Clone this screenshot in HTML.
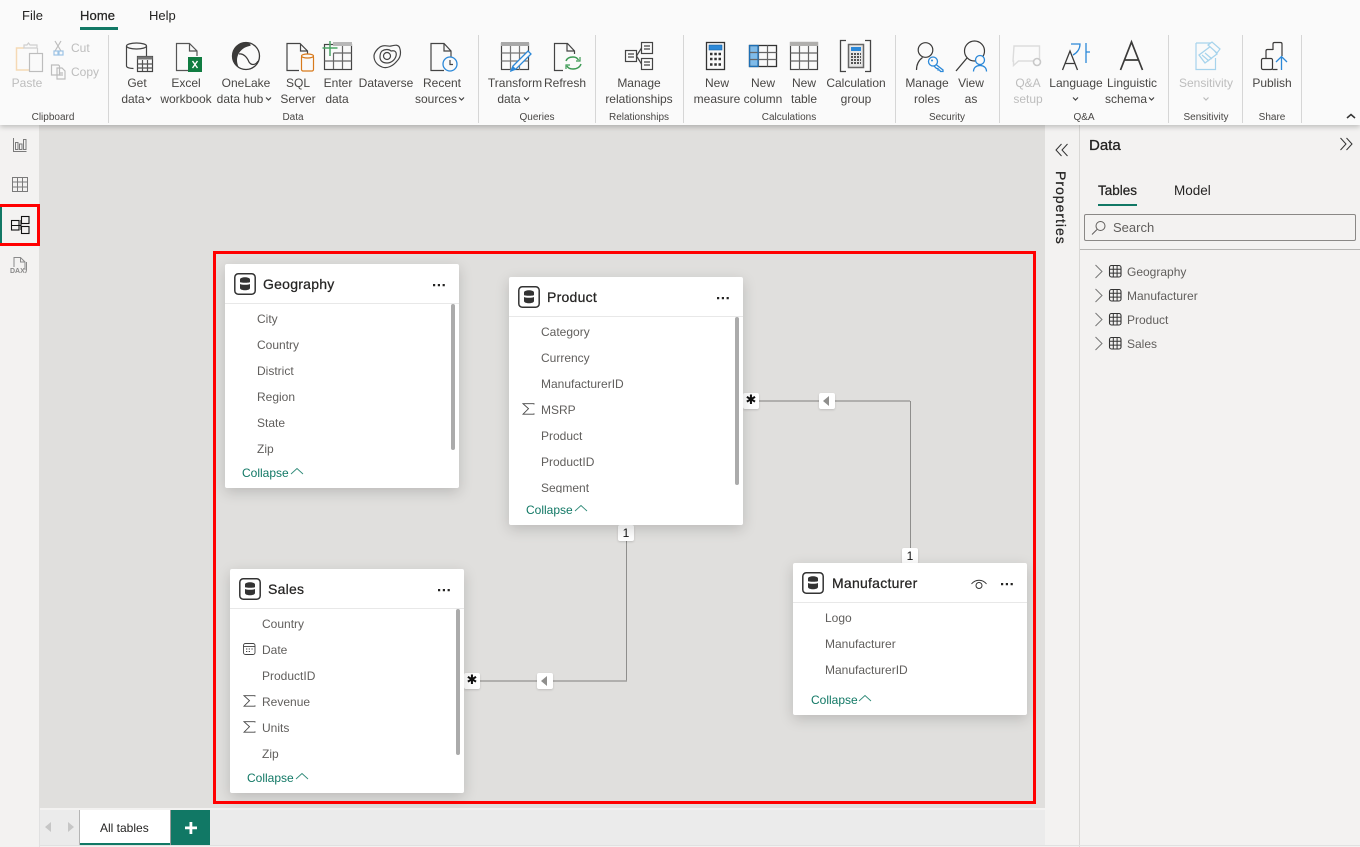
<!DOCTYPE html>
<html><head><meta charset="utf-8"><style>
html,body{margin:0;padding:0;width:1360px;height:847px;overflow:hidden;background:#f3f2f1}
body{position:relative;font-family:"Liberation Sans","DejaVu Sans",sans-serif;font-size:12px;color:#444}
div,span,svg{position:absolute}
.t{white-space:nowrap;line-height:16px}
.c{white-space:nowrap;line-height:16px;transform:translateX(-50%);color:#484644}
.g{white-space:nowrap;line-height:12px;font-size:10px;transform:translateX(-50%);color:#484644;top:112px}
.d{color:#bdbdbd}
.dv{width:1px;top:35px;height:88px;background:#d6d6d6}
.card{background:#fff;width:234px;border-radius:2px;box-shadow:0 4px 14px rgba(0,0,0,.17)}
.hd{left:0;top:39px;width:234px;height:1px;background:#e8e8e8}
.ti{left:38px;top:12px;font-size:14px;line-height:16px;color:#252423;white-space:nowrap;-webkit-text-stroke:.25px #252423;letter-spacing:.25px}
.list{left:0;top:40px;width:234px;overflow:hidden}
.f{left:32px;white-space:nowrap;line-height:16px;color:#605e5c}
.col{left:17px;color:#117865;line-height:16px;white-space:nowrap}
.sb{width:4px;background:#ababab;border-radius:2px;top:40px}
.bd{background:#fff;width:16px;height:16px;border-radius:2px;box-shadow:0 1px 2px rgba(0,0,0,.15);text-align:center;color:#111;line-height:16px}
.st{font-family:"DejaVu Sans",sans-serif;font-size:13px;line-height:16px}
.tr{left:1127px;color:#605e5c;line-height:16px;white-space:nowrap}
</style></head><body>
<!-- canvas -->
<div style="left:39px;top:125px;width:1006px;height:683px;background:#e0dfdd"></div>
<!-- left rail -->
<div style="left:0;top:125px;width:39px;height:722px;background:#f3f2f1"></div>
<div style="left:39px;top:808px;width:1px;height:39px;background:#e1e1e1"></div>
<!-- properties / data panel -->
<div style="left:1045px;top:125px;width:34px;height:722px;background:#f3f2f1"></div>
<div style="left:1079px;top:125px;width:1px;height:722px;background:#d9d8d6"></div>
<div style="left:1080px;top:125px;width:280px;height:722px;background:#f3f2f1"></div>
<!-- ribbon -->
<div style="left:0;top:0;width:1360px;height:125px;background:#fafafa;box-shadow:0 2px 5px rgba(0,0,0,.22)"></div>

<div class="t" style="left:22px;top:8px;font-size:13px;color:#252423">File</div>
<div class="t" style="left:80px;top:8px;font-size:13px;color:#252423;-webkit-text-stroke:.25px #252423;letter-spacing:.1px">Home</div>
<div style="left:80px;top:27px;width:38px;height:3px;background:#117865"></div>
<div class="t" style="left:149px;top:8px;font-size:13px;color:#252423">Help</div>

<div class="dv" style="left:108px"></div><div class="dv" style="left:478px"></div><div class="dv" style="left:595px"></div><div class="dv" style="left:683px"></div><div class="dv" style="left:895px"></div><div class="dv" style="left:999px"></div><div class="dv" style="left:1168px"></div><div class="dv" style="left:1242px"></div><div class="dv" style="left:1301px"></div>

<!-- ribbon labels -->
<div class="c d" style="left:27px;top:75px">Paste</div>
<div class="t d" style="left:71px;top:40px">Cut</div>
<div class="t d" style="left:71px;top:64px">Copy</div>
<div class="c" style="left:137px;top:75px">Get</div><div class="c" style="left:133px;top:91px">data</div>
<div class="c" style="left:186px;top:75px">Excel</div><div class="c" style="left:186px;top:91px">workbook</div>
<div class="c" style="left:246px;top:75px">OneLake</div><div class="c" style="left:240px;top:91px">data hub</div>
<div class="c" style="left:298px;top:75px">SQL</div><div class="c" style="left:298px;top:91px">Server</div>
<div class="c" style="left:338px;top:75px">Enter</div><div class="c" style="left:337px;top:91px">data</div>
<div class="c" style="left:386px;top:75px">Dataverse</div>
<div class="c" style="left:442px;top:75px">Recent</div><div class="c" style="left:436px;top:91px">sources</div>
<div class="c" style="left:515px;top:75px">Transform</div><div class="c" style="left:509px;top:91px">data</div>
<div class="c" style="left:565px;top:75px">Refresh</div>
<div class="c" style="left:639px;top:75px">Manage</div><div class="c" style="left:639px;top:91px">relationships</div>
<div class="c" style="left:717px;top:75px">New</div><div class="c" style="left:717px;top:91px">measure</div>
<div class="c" style="left:763px;top:75px">New</div><div class="c" style="left:763px;top:91px">column</div>
<div class="c" style="left:804px;top:75px">New</div><div class="c" style="left:804px;top:91px">table</div>
<div class="c" style="left:856px;top:75px">Calculation</div><div class="c" style="left:856px;top:91px">group</div>
<div class="c" style="left:927px;top:75px">Manage</div><div class="c" style="left:927px;top:91px">roles</div>
<div class="c" style="left:971px;top:75px">View</div><div class="c" style="left:971px;top:91px">as</div>
<div class="c d" style="left:1028px;top:75px">Q&amp;A</div><div class="c d" style="left:1028px;top:91px">setup</div>
<div class="c" style="left:1076px;top:75px">Language</div>
<div class="c" style="left:1132px;top:75px">Linguistic</div><div class="c" style="left:1126px;top:91px">schema</div>
<div class="c d" style="left:1206px;top:75px">Sensitivity</div>
<div class="c" style="left:1272px;top:75px">Publish</div>

<div class="g" style="left:53px">Clipboard</div>
<div class="g" style="left:293px">Data</div>
<div class="g" style="left:537px">Queries</div>
<div class="g" style="left:639px">Relationships</div>
<div class="g" style="left:789px">Calculations</div>
<div class="g" style="left:947px">Security</div>
<div class="g" style="left:1084px">Q&amp;A</div>
<div class="g" style="left:1206px">Sensitivity</div>
<div class="g" style="left:1272px">Share</div>

<!-- ribbon icons -->
<svg style="left:0;top:0" width="1360" height="125" fill="none" stroke-width="1.2">
<!-- chevrons -->
<g stroke="#444"><path d="M146 97.500l2.500 2.500 2.500-2.500M266 97.500l2.500 2.500 2.500-2.500M459 97.500l2.500 2.500 2.500-2.500M524 97.500l2.500 2.500 2.500-2.500M1073 97.500l2.500 2.500 2.500-2.500M1149 97.500l2.500 2.500 2.500-2.500"/></g>
<path d="M1203.500 97.500l2.500 2.500 2.500-2.500" stroke="#bbb"/>
<path d="M1347 118l4-3.500 4 3.500" stroke="#333" stroke-width="1.500"/>
<!-- paste -->
<path d="M24 48h-7.500v22h16" stroke="#f5d9b5" stroke-width="1.500"/><path d="M24 47v-2h3l1.500-2 1.500 2h7v3H24zM37.500 48v5" stroke="#cfcfcf"/><rect x="29.500" y="53.500" width="13" height="18" fill="#fafafa" stroke="#bdbdbd"/>
<!-- cut -->
<path d="M55 41l6 10M61 41l-6 10" stroke="#bdbdbd"/><rect x="54" y="51" width="4" height="4" stroke="#9cc3e5"/><rect x="59" y="51" width="4" height="4" stroke="#9cc3e5"/>
<!-- copy -->
<path d="M51.500 65h7l1 1v9h-8zM57 68h5l3 3v8h-8z" stroke="#bdbdbd"/><path d="M59 73h4M59 75h4" stroke="#bdbdbd"/>
<!-- get data -->
<g stroke="#444"><ellipse cx="136.500" cy="46" rx="10" ry="3"/><path d="M126.500 46v20c0 1.500 3 2.500 7 2.500M146.500 46v10"/></g>
<rect x="137.500" y="56.500" width="15" height="15" fill="#fafafa" stroke="#444"/><rect x="137.500" y="56.500" width="15" height="3" fill="#777"/><path d="M137.500 64h15M137.500 68h15M142.500 60v11M147.500 60v11" stroke="#555"/>
<!-- excel -->
<path d="M188.500 70.500h-12v-27h13l7.500 7.500v5M189.500 43.500v7.500h7.500" stroke="#555"/><rect x="188" y="57" width="14" height="15" fill="#107c41"/><path d="M192.500 61l5 7M197.500 61l-5 7" stroke="#fff" stroke-width="1.400"/>
<!-- onelake -->
<circle cx="246" cy="56" r="13.500" stroke="#3b3a39" stroke-width="1.300"/><path d="M246 42.500c-7 0-13.500 6-13.500 13.500 0 5 3 9 6 11-2-5-2-9 0-13 2-4 6-7 11-8 3-.5 0-3.500-3.500-3.500z" fill="#3b3a39"/><path d="M239 54c4-1 8 3 10 8 2 3 6 4 9-1" stroke="#3b3a39"/>
<!-- sql -->
<path d="M299 70.500h-12v-27h13l7.500 7.500v3M300.500 43.500v7.500h7" stroke="#444"/><rect x="301.500" y="56" width="12" height="15" rx="1.500" fill="#fafafa" stroke="#d87a1c"/><ellipse cx="307.500" cy="56" rx="6" ry="2" fill="#fafafa" stroke="#d87a1c"/>
<!-- enter data -->
<rect x="324.500" y="44.500" width="27" height="25" stroke="#444"/><rect x="333" y="42" width="19" height="4" fill="#b8b8b8"/><path d="M333.500 53h18M324.500 61h27M333.500 53v16M342.500 46v23" stroke="#666"/><path d="M322.500 48h15M330 41v15" stroke="#4aa564" stroke-width="1.500"/>
<!-- dataverse -->
<g stroke="#444"><path d="M380 47c5-3 8 0 11-1 4-1 8-2 9 3 1 4 1 8-3 12-4 5-10 8-15 6-5-2-8-6-8-11 0-3 3-7 6-9z"/><path d="M382 51c3-2 7-2 9 0 4-1 6 1 5 5-1 4-5 7-9 7-4 0-7-2-7-6 0-3 1-5 2-6z"/><circle cx="387" cy="56" r="3.500"/></g>
<!-- recent -->
<path d="M444 70.500h-13v-27h13l7 7.500v6M444 43.500v7.500h7" stroke="#444"/><circle cx="450" cy="64" r="7" fill="#fafafa" stroke="#2b88d8" stroke-width="1.300"/><path d="M450 60v4.500h3" stroke="#444"/>
<!-- transform -->
<rect x="501.500" y="43.500" width="27" height="26" stroke="#444"/><rect x="501" y="42" width="28" height="4" fill="#a8a8a8"/><path d="M501.500 53h27M501.500 61h27M510.500 46v24M519.500 46v24" stroke="#777"/>
<path d="M513 66l15-15 3 3-15 15-5 2z" fill="#fafafa" stroke="#2b88d8" stroke-width="1.300"/><path d="M510 71l3-5 3 3z" fill="#2b88d8"/>
<!-- refresh -->
<path d="M563 70.500h-8.500v-27h13l7 7.500v3M567 43.500v7.500h7.500" stroke="#444"/><path d="M566 61c1-3 4-4 7-4s4 1 5.500 3M581 64c-1 3-4 5-8 5-3 0-5-1-6-3" stroke="#3c9a54" stroke-width="1.400"/><path d="M580 57v4h-4M566 69v-4h4" stroke="#3c9a54"/>
<!-- manage relationships -->
<g stroke="#444"><rect x="625.500" y="50.500" width="11" height="11"/><rect x="641.500" y="42.500" width="11" height="11"/><rect x="641.500" y="58.500" width="11" height="11"/><path d="M636.500 56l5-8M636.500 56l5 8M628 54h6M628 57h6M644 46h6M644 49h6M644 62h6M644 65h6"/></g>
<!-- new measure -->
<rect x="706.500" y="42.500" width="18" height="27" stroke="#333" stroke-width="1.300"/><rect x="709" y="45" width="13" height="5" fill="#2b88d8" stroke="#1a5f9c" stroke-width=".6"/>
<path d="M710 54h2.500M714.300 54h2.500M718.500 54h2.500M710 59h2.500M714.300 59h2.500M718.500 59h2.500M710 64.500h2.500M714.300 64.500h2.500M718.500 64.500h2.500" stroke="#333" stroke-width="2.600"/>
<!-- new column -->
<rect x="749.500" y="45.500" width="8" height="21" fill="#7fbbe9"/><rect x="749.500" y="45.500" width="27" height="21" stroke="#333" stroke-width="1.300"/><path d="M749.500 52.500h27M749.500 59.500h27M758.500 45.500v21M767.500 45.500v21" stroke="#666"/><path d="M749.500 45.500v21h8.500v-21z" stroke="#1d6fb5"/>
<!-- new table -->
<rect x="790.500" y="42.500" width="27" height="27" stroke="#444" stroke-width="1.200"/><rect x="790" y="42" width="28" height="4" fill="#b0afad"/><path d="M790.500 53h27M790.500 61h27M799.500 46v24M808.500 46v24" stroke="#666"/>
<!-- calc group -->
<path d="M846 40.500h-5.500v31h5.500M865 40.500h5.500v31H865" stroke="#444" stroke-width="1.300"/><rect x="848.500" y="44.500" width="15" height="23" fill="#e6e6e6" stroke="#666" stroke-width="1.500"/><rect x="851" y="47" width="10" height="4" fill="#2b88d8"/>
<path d="M851 54h10M851 57h10M851 60h10M851 63h10" stroke="#555" stroke-width="2" stroke-dasharray="2 1"/>
<!-- manage roles -->
<g stroke="#3b3a39"><circle cx="925.500" cy="50" r="7.300"/><path d="M916.500 70c0-6 2-9.500 6-12.500"/></g>
<g stroke="#2b88d8" stroke-width="1.300"><circle cx="933" cy="61.500" r="4.500" fill="#fafafa"/><path d="M936 64.500l7 5.500v1.500h-2.500l-1-1.500h-1.500v-1.500h-1.500l-2.500-2.500"/></g><circle cx="932" cy="60.500" r="1" fill="#2b88d8"/>
<!-- view as -->
<g stroke="#3b3a39"><circle cx="974.500" cy="51" r="10"/><path d="M967 58l-11 13" stroke-width="1.300"/></g>
<g stroke="#2b88d8" stroke-width="1.300"><circle cx="980" cy="60" r="4.500" fill="#fafafa"/><path d="M973.500 71.500c0-4 3-6 6.500-6s6.500 2 6.500 6"/></g>
<!-- q&a -->
<path d="M1014 46h25.500v15h-21l-5 4.500v-4.500h-.5z" stroke="#dcdcdc" stroke-width="1.400"/><circle cx="1037" cy="62" r="3.500" fill="#fafafa" stroke="#c8c8c8" stroke-width="1.600"/>
<!-- language -->
<path d="M1062.500 70l7.500-19 7.500 19M1065 63.500h10" stroke="#3b3a39" stroke-width="1.300"/><path d="M1071 44h9c0 5-3 9-7 11M1086 43v20M1086 52h4" stroke="#2b88d8" stroke-width="1.300"/>
<!-- linguistic -->
<path d="M1120.500 70l11-28 11 28M1124.500 60h14" stroke="#3b3a39" stroke-width="1.700"/>
<!-- sensitivity -->
<path d="M1196 43h16v5M1215.500 58v11.500H1196V43" stroke="#a6d3ec"/><path d="M1199 55l12-9 6 8-12 9z" fill="#fafafa" stroke="#a6d3ec" stroke-width="1.300"/><path d="M1208 45l4-3 8 7-3 4z" fill="#fafafa" stroke="#a6d3ec"/><path d="M1202 55l7 6M1205 53l7 6" stroke="#a6d3ec"/>
<!-- publish -->
<g stroke="#3b3a39"><rect x="1261.500" y="58.500" width="11" height="11" rx="1.500"/><path d="M1266 58v-7c0-1 .5-1.500 1.500-1.500h5.500M1273 50v-6c0-1 .5-1.500 1.500-1.500h6c1 0 1.500.5 1.500 1.500v12M1272.500 69.500h5"/></g><path d="M1281.500 70V57M1276 62l5.500-5.500 5.500 5.500" stroke="#2b88d8" stroke-width="1.300"/>
</svg>

<!-- rail icons -->
<svg style="left:0;top:125px" width="40" height="160" fill="none">
<g stroke="#7a7a7a"><path d="M13.500 13v13.500h13"/><rect x="15.500" y="17.500" width="2.500" height="7"/><rect x="19.500" y="19" width="2.500" height="5.500"/><rect x="23.500" y="14.500" width="2.500" height="10"/></g>
<g stroke="#7a7a7a"><rect x="12.500" y="52.500" width="15" height="14"/><path d="M12.500 57h15M12.500 62h15M17.500 52.500v14M22.500 52.500v14"/></g>
<g stroke="#111" stroke-width="1.100"><rect x="11.500" y="95.500" width="7.500" height="9.500"/><rect x="21.500" y="91.500" width="7.500" height="7"/><rect x="21.500" y="101.500" width="7.500" height="7"/><path d="M11.500 100.500h7.500M19 100.500h2M21 95v10"/></g>
<g stroke="#8a8a8a"><path d="M14 142v-9.500h6.500l4.500 4.500v8M20.500 132.500v4.500h4.500M26.500 137v8c0 1-.5 2-1 3"/></g>
<text x="10" y="148" font-family="Liberation Sans" font-size="7" fill="#8a8a8a" font-weight="bold">DAX</text>
</svg>

<!-- connectors -->
<svg style="left:0;top:0" width="1360" height="847" fill="none">
<path d="M758 401H910" stroke="#a09f9d" stroke-width="1.600"/><path d="M910.500 401V550" stroke="#8f8e8c"/>
<path d="M626.500 540V681" stroke="#8f8e8c"/><path d="M627 681H478" stroke="#a09f9d" stroke-width="1.600"/>
</svg>
<div class="bd st" style="left:743px;top:393px">✱</div>
<div class="bd" style="left:819px;top:393px"></div>
<svg style="left:822px;top:396px" width="10" height="10"><path d="M7 0v10L1 5z" fill="#8f8e8c"/></svg>
<div class="bd" style="left:902px;top:548px">1</div>
<div class="bd" style="left:618px;top:525px;">1</div>
<div class="bd st" style="left:464px;top:673px">✱</div>
<div class="bd" style="left:537px;top:673px"></div>
<svg style="left:540px;top:676px" width="10" height="10"><path d="M7 0v10L1 5z" fill="#8f8e8c"/></svg>

<!-- Geography -->
<div class="card" style="left:225px;top:264px;height:224px">
<svg style="left:9px;top:9px" width="22" height="22" fill="none"><rect x=".8" y=".8" width="20.400" height="20.400" rx="3.500" stroke="#333" stroke-width="1.500"/><path d="M6 6.500c0-3 10-3 10 0v2.500c0 1-10 1-10 0zM6 11c2 1 8 1 10 0v4c0 3-10 3-10 0z" fill="#333"/></svg>
<div class="ti">Geography</div>
<svg style="left:208px;top:20px" width="12" height="3"><path d="M0 0h2.200v2.200H0zM4.800 0H7v2.200H4.800zM9.600 0h2.200v2.200H9.600z" fill="#252423"/></svg>
<div class="hd"></div>
<div class="list" style="height:172px">
<div class="f" style="top:7px">City</div><div class="f" style="top:33px">Country</div><div class="f" style="top:59px">District</div><div class="f" style="top:85px">Region</div><div class="f" style="top:111px">State</div><div class="f" style="top:137px">Zip</div>
</div>
<div class="sb" style="left:226px;height:146px"></div>
<div class="col" style="top:201px">Collapse</div>
<svg style="left:65px;top:203px" width="14" height="9" fill="none"><path d="M1 7l6-5.500L13 7" stroke="#2f8a78" stroke-width=".9"/></svg>
</div>

<!-- Product -->
<div class="card" style="left:509px;top:277px;height:248px">
<svg style="left:9px;top:9px" width="22" height="22" fill="none"><rect x=".8" y=".8" width="20.400" height="20.400" rx="3.500" stroke="#333" stroke-width="1.500"/><path d="M6 6.500c0-3 10-3 10 0v2.500c0 1-10 1-10 0zM6 11c2 1 8 1 10 0v4c0 3-10 3-10 0z" fill="#333"/></svg>
<div class="ti">Product</div>
<svg style="left:208px;top:20px" width="12" height="3"><path d="M0 0h2.200v2.200H0zM4.800 0H7v2.200H4.800zM9.600 0h2.200v2.200H9.600z" fill="#252423"/></svg>
<div class="hd"></div>
<div class="list" style="height:176px">
<div class="f" style="top:7px">Category</div><div class="f" style="top:33px">Currency</div><div class="f" style="top:59px">ManufacturerID</div><div class="f" style="top:85px">MSRP</div><div class="f" style="top:111px">Product</div><div class="f" style="top:137px">ProductID</div><div class="f" style="top:163px">Segment</div>
<svg style="left:13px;top:86px" width="13" height="12" fill="none"><path d="M12 1.500V.7H1l5.500 5-5.500 5.500h11v-.8" stroke="#444" stroke-width=".9"/></svg>
</div>
<div class="sb" style="left:226px;height:168px"></div>
<div class="col" style="top:225px">Collapse</div>
<svg style="left:65px;top:227px" width="14" height="9" fill="none"><path d="M1 7l6-5.500L13 7" stroke="#2f8a78" stroke-width=".9"/></svg>
</div>

<!-- Sales -->
<div class="card" style="left:230px;top:569px;height:224px">
<svg style="left:9px;top:9px" width="22" height="22" fill="none"><rect x=".8" y=".8" width="20.400" height="20.400" rx="3.500" stroke="#333" stroke-width="1.500"/><path d="M6 6.500c0-3 10-3 10 0v2.500c0 1-10 1-10 0zM6 11c2 1 8 1 10 0v4c0 3-10 3-10 0z" fill="#333"/></svg>
<div class="ti">Sales</div>
<svg style="left:208px;top:20px" width="12" height="3"><path d="M0 0h2.200v2.200H0zM4.800 0H7v2.200H4.800zM9.600 0h2.200v2.200H9.600z" fill="#252423"/></svg>
<div class="hd"></div>
<div class="list" style="height:172px">
<div class="f" style="top:7px">Country</div><div class="f" style="top:33px">Date</div><div class="f" style="top:59px">ProductID</div><div class="f" style="top:85px">Revenue</div><div class="f" style="top:111px">Units</div><div class="f" style="top:137px">Zip</div>
<svg style="left:13px;top:34px" width="13" height="12" fill="none"><rect x=".5" y=".5" width="11.500" height="11" rx="2" stroke="#444" stroke-width=".9"/><path d="M.5 3.500h11.500" stroke="#444" stroke-width=".9"/><path d="M3 6h1.300M5.700 6H7M8.400 6h1.300M3 8.500h1.300M5.700 8.500H7" stroke="#444"/></svg>
<svg style="left:13px;top:86px" width="13" height="12" fill="none"><path d="M12 1.500V.7H1l5.500 5-5.500 5.500h11v-.8" stroke="#444" stroke-width=".9"/></svg>
<svg style="left:13px;top:112px" width="13" height="12" fill="none"><path d="M12 1.500V.7H1l5.500 5-5.500 5.500h11v-.8" stroke="#444" stroke-width=".9"/></svg>
</div>
<div class="sb" style="left:226px;height:146px"></div>
<div class="col" style="top:201px">Collapse</div>
<svg style="left:65px;top:203px" width="14" height="9" fill="none"><path d="M1 7l6-5.500L13 7" stroke="#2f8a78" stroke-width=".9"/></svg>
</div>

<!-- Manufacturer -->
<div class="card" style="left:793px;top:563px;height:152px">
<svg style="left:9px;top:9px" width="22" height="22" fill="none"><rect x=".8" y=".8" width="20.400" height="20.400" rx="3.500" stroke="#333" stroke-width="1.500"/><path d="M6 6.500c0-3 10-3 10 0v2.500c0 1-10 1-10 0zM6 11c2 1 8 1 10 0v4c0 3-10 3-10 0z" fill="#333"/></svg>
<div class="ti" style="left:39px">Manufacturer</div>
<svg style="left:177px;top:14px" width="18" height="14" fill="none"><path d="M1.500 7c4-5 11-5 15 0" stroke="#333"/><circle cx="9" cy="8.500" r="3" stroke="#333"/></svg>
<svg style="left:208px;top:20px" width="12" height="3"><path d="M0 0h2.200v2.200H0zM4.800 0H7v2.200H4.800zM9.600 0h2.200v2.200H9.600z" fill="#252423"/></svg>
<div class="hd"></div>
<div class="list" style="height:100px">
<div class="f" style="top:7px">Logo</div><div class="f" style="top:33px">Manufacturer</div><div class="f" style="top:59px">ManufacturerID</div>
</div>
<div class="col" style="top:129px;left:18px">Collapse</div>
<svg style="left:65px;top:131px" width="14" height="9" fill="none"><path d="M1 7l6-5.500L13 7" stroke="#2f8a78" stroke-width=".9"/></svg>
</div>

<!-- red highlight -->
<div style="left:213px;top:251px;width:817px;height:547px;border:3px solid #ff0000"></div>
<div style="left:0;top:204px;width:40px;height:42px;box-sizing:border-box;border:3px solid #ff0000;border-left:0"></div>
<div style="left:0;top:207px;width:2px;height:36px;background:#117865"></div>
<div style="left:0;top:204px;width:2px;height:3px;background:#ff0000"></div>

<!-- properties -->
<svg style="left:1055px;top:143px" width="14" height="14" fill="none"><path d="M6.500 1L1 7l5.500 6M12.500 1L7 7l5.500 6" stroke="#333"/></svg>
<div class="t" style="left:1053px;top:171px;writing-mode:vertical-rl;font-size:14px;color:#252423;-webkit-text-stroke:.25px #252423;letter-spacing:1px">Properties</div>

<!-- data pane -->
<div class="t" style="left:1089px;top:136px;font-size:15px;line-height:18px;color:#252423;-webkit-text-stroke:.3px #252423;margin-top:1px">Data</div>
<svg style="left:1339px;top:137px" width="14" height="14" fill="none"><path d="M1.500 1L7 7l-5.500 6M7.500 1L13 7l-5.500 6" stroke="#333"/></svg>
<div class="t" style="left:1098px;top:183px;font-size:13.500px;color:#252423;-webkit-text-stroke:.25px #252423">Tables</div>
<div style="left:1098px;top:204px;width:39px;height:2px;background:#117865"></div>
<div class="t" style="left:1174px;top:183px;font-size:13.500px;color:#252423">Model</div>
<div style="left:1084px;top:214px;width:270px;height:25px;border:1px solid #8a8886;border-radius:2px"></div>
<svg style="left:1091px;top:220px" width="16" height="16" fill="none"><circle cx="9.500" cy="6" r="4.500" stroke="#605e5c"/><path d="M6 9.500L1 14.500" stroke="#605e5c"/></svg>
<div class="t" style="left:1113px;top:220px;font-size:13px;color:#605e5c">Search</div>
<div style="left:1080px;top:249px;width:280px;height:1px;background:#b5b4b2"></div>
<svg style="left:1094px;top:263px" width="30" height="90" fill="none">
<defs><g id="tb"><path d="M1.500 2l6.500 6.500-6.500 6.500" stroke="#777"/><rect x="15.500" y="2.500" width="11.500" height="11.500" rx="2" stroke="#333" stroke-width="1.100"/><path d="M15.500 6.300h11.500M15.500 10.100h11.500M19.300 2.500v11.500M23.100 2.500v11.500" stroke="#333"/></g></defs>
<use href="#tb" y="0"/><use href="#tb" y="24"/><use href="#tb" y="48"/><use href="#tb" y="72"/></svg>
<div class="tr" style="top:264px">Geography</div><div class="tr" style="top:288px">Manufacturer</div><div class="tr" style="top:312px">Product</div><div class="tr" style="top:336px">Sales</div>

<!-- bottom tabs -->
<div style="left:40px;top:810px;width:1005px;height:35px;background:#ebebeb"></div>
<div style="left:40px;top:845px;width:1320px;height:1px;background:#e1e1e1"></div>
<svg style="left:44px;top:821px" width="32" height="14"><path d="M7 1v10L1 6zM24 1v10l6-5z" fill="#c6c6c6"/></svg>
<div style="left:79px;top:810px;width:1px;height:35px;background:#b5b5b5"></div>
<div style="left:80px;top:810px;width:90px;height:33px;background:#fff;border-bottom:2px solid #117865"></div>
<div class="t" style="left:100px;top:820px;color:#252423">All tables</div>
<div style="left:170px;top:810px;width:1px;height:35px;background:#9a9a9a"></div>
<div style="left:171px;top:810px;width:39px;height:35px;background:#117865"></div>
<svg style="left:185px;top:822px" width="12" height="12"><path d="M4.500 0h2.800v4.500H12v2.800H7.300V12H4.500V7.300H0V4.500h4.500z" fill="#fff"/></svg>
</body></html>
